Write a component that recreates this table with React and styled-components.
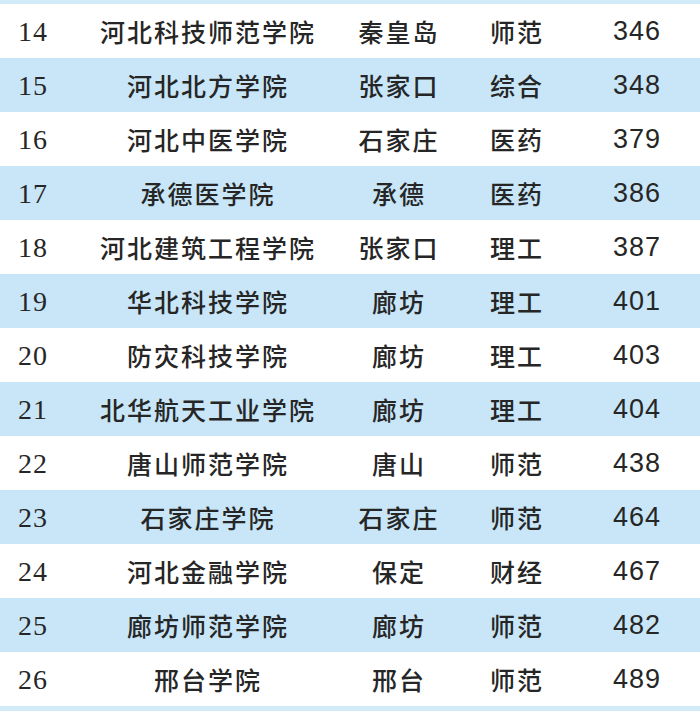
import styled, { createGlobalStyle } from "styled-components"

const GlobalStyle = createGlobalStyle`
  html, body {
    margin: 0;
    padding: 0;
    background: #ffffff;
  }
`

const Table = styled.div`
  width: 700px;
  height: 711px;
  box-sizing: border-box;
  padding: 4px 0 5px;
  background-color: #d2ebf9;
  display: flex;
  flex-direction: column;
  font-family: "Noto Sans CJK SC", "Noto Sans", sans-serif;
  color: #262626;
`

const Row = styled.div`
  height: 54px;
  display: grid;
  grid-template-columns: 100px 216px 166px 70px 1fr;
  align-items: center;
  background-color: ${(p) => (p.$shaded ? "#c8e6f8" : "#ffffff")};
`

const Rank = styled.div`
  padding-left: 18px;
  padding-top: 2px;
  font-family: "Liberation Serif", "DejaVu Serif", serif;
  font-size: 28px;
  letter-spacing: 1px;
`

const Cell = styled.div`
  text-align: center;
  white-space: nowrap;
  font-size: 25px;
  font-weight: 500;
  letter-spacing: 2px;
`

const Score = styled.div`
  padding-left: 61px;
  font-family: "Liberation Sans", Arial, sans-serif;
  font-size: 27px;
  letter-spacing: 1px;
`

const rows = [
  [14, "河北科技师范学院", "秦皇岛", "师范", 346],
  [15, "河北北方学院", "张家口", "综合", 348],
  [16, "河北中医学院", "石家庄", "医药", 379],
  [17, "承德医学院", "承德", "医药", 386],
  [18, "河北建筑工程学院", "张家口", "理工", 387],
  [19, "华北科技学院", "廊坊", "理工", 401],
  [20, "防灾科技学院", "廊坊", "理工", 403],
  [21, "北华航天工业学院", "廊坊", "理工", 404],
  [22, "唐山师范学院", "唐山", "师范", 438],
  [23, "石家庄学院", "石家庄", "师范", 464],
  [24, "河北金融学院", "保定", "财经", 467],
  [25, "廊坊师范学院", "廊坊", "师范", 482],
  [26, "邢台学院", "邢台", "师范", 489],
]

const App = () => {
  return (
    <>
      <GlobalStyle />
      <Table>
        {rows.map(([rank, name, city, type, score], i) => (
          <Row key={rank} $shaded={i % 2 === 1}>
            <Rank>{rank}</Rank>
            <Cell>{name}</Cell>
            <Cell>{city}</Cell>
            <Cell>{type}</Cell>
            <Score>{score}</Score>
          </Row>
        ))}
      </Table>
    </>
  )
}

export default App
